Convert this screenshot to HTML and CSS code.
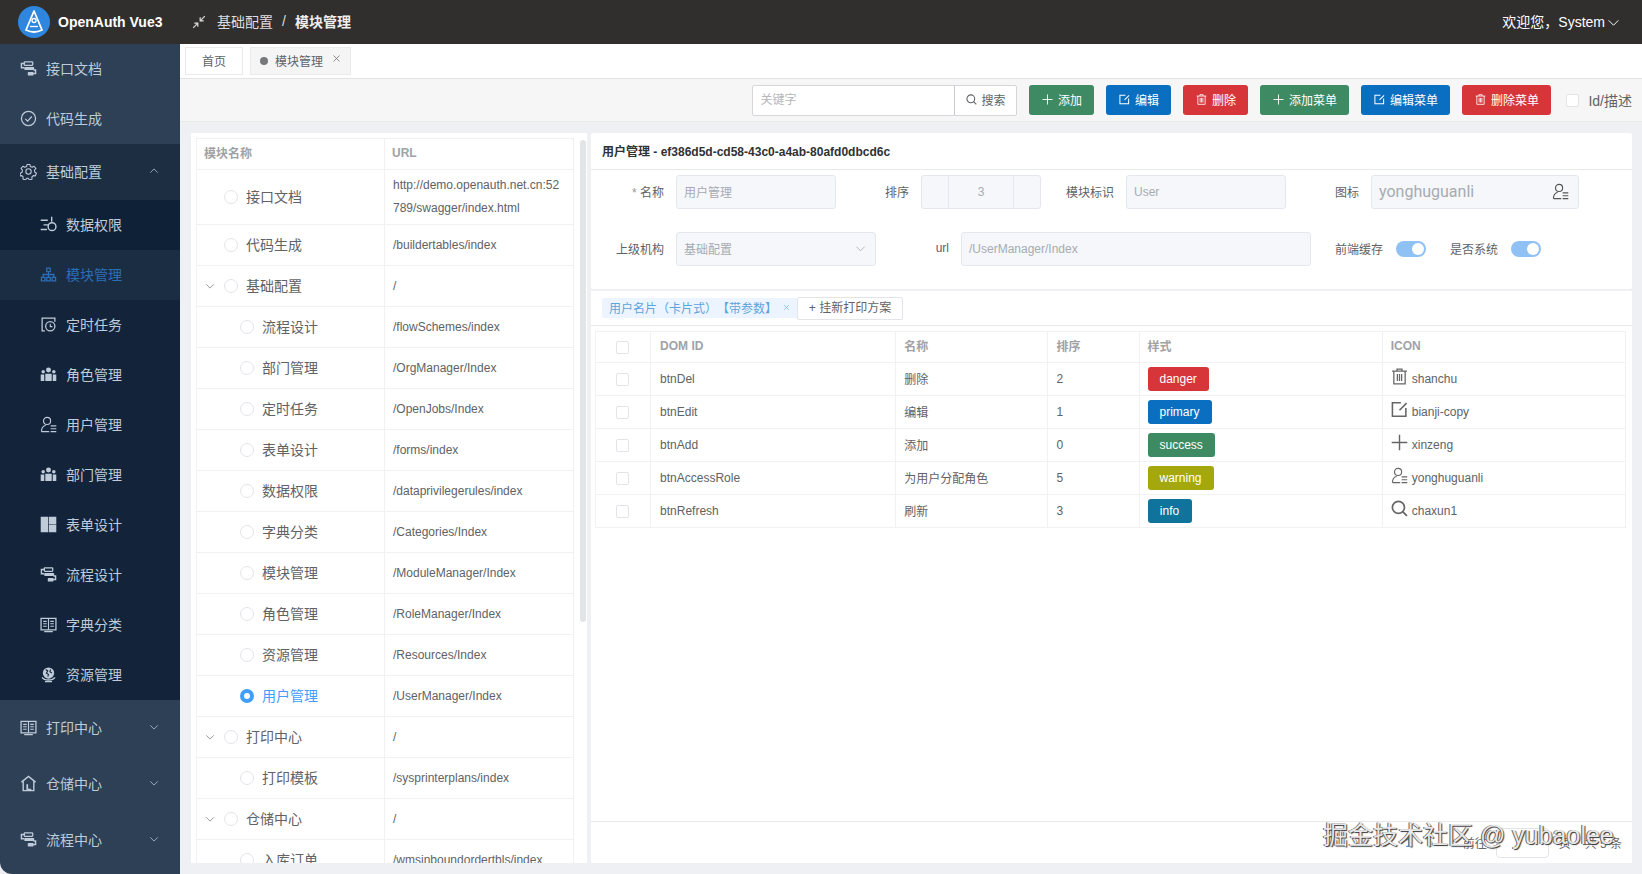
FILE: index.html
```html
<!DOCTYPE html>
<html lang="zh-CN">
<head>
    <meta charset="UTF-8">
    <title>OpenAuth Vue3</title>
    <link rel="stylesheet" href="styles.css">
</head>
<body>
    <!-- Icon sprite -->
    <svg class="sprite" xmlns="http://www.w3.org/2000/svg">
        <symbol id="i-flow" viewBox="0 0 24 24">
            <path d="M7 5H2v6h4M18 19h4v-5h-3" fill="none" stroke="currentColor" stroke-width="2"/>
            <rect x="6" y="2.500" width="12" height="5" rx="1" fill="none" stroke="currentColor" stroke-width="1.800"/>
            <rect x="6" y="10" width="14" height="4" rx="1" fill="currentColor"/>
            <rect x="11" y="17" width="8" height="5" rx="1" fill="currentColor"/>
        </symbol>
        <symbol id="i-check" viewBox="0 0 24 24">
            <circle cx="12" cy="12" r="10" fill="none" stroke="currentColor" stroke-width="1.800"/>
            <path d="M7.500 12.500l3.200 3.200 6-6.500" fill="none" stroke="currentColor" stroke-width="1.800"/>
        </symbol>
        <symbol id="i-gear" viewBox="0 0 24 24">
            <path d="M10 2h4l.7 3 2.400 1.100 2.700-1.500 2.600 3-1.900 2.500.3 2.600 2.400 1.800-1.500 3.700-3-.4-1.900 1.900.3 3-3.700 1.300-1.700-2.500h-2.200l-1.700 2.500-3.700-1.300.3-3-1.900-1.900-3 .4L.7 14.500l2.400-1.800.3-2.600L1.500 7.600l2.600-3 2.700 1.500L9.300 5z" fill="none" stroke="currentColor" stroke-width="1.500" stroke-linejoin="round"/>
            <circle cx="12" cy="12" r="3.800" fill="none" stroke="currentColor" stroke-width="1.500"/>
        </symbol>
        <symbol id="i-data" viewBox="0 0 24 24">
            <path d="M1 6h10M5 12.500h7M1 19h9M16.500 1v7" fill="none" stroke="currentColor" stroke-width="2"/>
            <circle cx="17" cy="15" r="5.500" fill="none" stroke="currentColor" stroke-width="2"/>
        </symbol>
        <symbol id="i-org" viewBox="0 0 24 24">
            <path d="M9.500 3h5v5h-5zM2 16h5v5H2zM9.500 16h5v5h-5zM17 16h5v5h-5z" fill="none" stroke="currentColor" stroke-width="1.800"/>
            <path d="M12 8v4M4.500 16v-4h15v4M12 12v4" fill="none" stroke="currentColor" stroke-width="1.800"/>
        </symbol>
        <symbol id="i-timer" viewBox="0 0 24 24">
            <path d="M9 3H3v18h4M7 3h14v5" fill="none" stroke="currentColor" stroke-width="1.800"/>
            <circle cx="14.500" cy="14.500" r="6.500" fill="none" stroke="currentColor" stroke-width="1.800"/>
            <path d="M14.500 11v4h3" fill="none" stroke="currentColor" stroke-width="1.500"/>
        </symbol>
        <symbol id="i-users" viewBox="0 0 24 24">
            <circle cx="12" cy="5.500" r="3.500" fill="currentColor"/>
            <circle cx="4.500" cy="8" r="2.500" fill="currentColor"/>
            <circle cx="19.500" cy="8" r="2.500" fill="currentColor"/>
            <path d="M7.500 11h9v10h-9zM1 12h5v9H1zM18 12h5v9h-5z" fill="currentColor"/>
        </symbol>
        <symbol id="i-user" viewBox="0 0 24 24">
            <circle cx="10" cy="7" r="5" fill="none" stroke="currentColor" stroke-width="1.600"/>
            <path d="M2 22c0-5 3-8 6-9M2 22h11M15 14h8M15 18h8M15 22h8" fill="none" stroke="currentColor" stroke-width="1.600"/>
        </symbol>
        <symbol id="i-layout" viewBox="0 0 24 24">
            <path d="M1 1h10.500v22H1zM12.500 1H23v10.500H12.500zM12.500 12.500H23V23H12.500z" fill="currentColor"/>
        </symbol>
        <symbol id="i-book" viewBox="0 0 24 24">
            <path d="M1.500 3.500h21v16h-21z" fill="none" stroke="currentColor" stroke-width="1.800"/>
            <path d="M12 3.500v16M4.500 7.500h5M4.500 11h5M4.500 14.500h5M14.500 7.500h5M14.500 11h5M14.500 14.500h5M6 22h12" fill="none" stroke="currentColor" stroke-width="1.600"/>
        </symbol>
        <symbol id="i-globe" viewBox="0 0 24 24">
            <circle cx="12" cy="10" r="8" fill="currentColor"/>
            <path d="M8 5l3 2-2 3 3 2-1 3M15 5l-1 3 3 2" fill="none" stroke="#13243a" stroke-width="1.500"/>
            <path d="M3 16c3 5 15 5 18 0M7 22h10" fill="none" stroke="currentColor" stroke-width="2"/>
        </symbol>
        <symbol id="i-house" viewBox="0 0 24 24">
            <path d="M2 10l10-8 10 8M4.500 9v13h15V9" fill="none" stroke="currentColor" stroke-width="2"/>
            <path d="M9 22v-9h2.500v6.500H16V22z" fill="currentColor"/>
        </symbol>
        <symbol id="i-down" viewBox="0 0 24 24">
            <path d="M3 8l9 9 9-9" fill="none" stroke="currentColor" stroke-width="1.800"/>
        </symbol>
        <symbol id="i-up" viewBox="0 0 24 24">
            <path d="M3 16l9-9 9 9" fill="none" stroke="currentColor" stroke-width="1.800"/>
        </symbol>
        <symbol id="i-x" viewBox="0 0 24 24">
            <path d="M4 4l16 16M20 4L4 20" fill="none" stroke="currentColor" stroke-width="2"/>
        </symbol>
        <symbol id="i-collapse" viewBox="0 0 24 24">
            <path d="M22 2l-8 8M14 4v6h6M2 22l8-8M4 14h6v6" fill="none" stroke="currentColor" stroke-width="2"/>
        </symbol>
        <symbol id="i-search" viewBox="0 0 24 24">
            <circle cx="10.500" cy="10.500" r="8.500" fill="none" stroke="currentColor" stroke-width="2.400"/>
            <path d="M16.500 16.500l6 6" fill="none" stroke="currentColor" stroke-width="2.400"/>
        </symbol>
        <symbol id="i-plus" viewBox="0 0 24 24">
            <path d="M12 1v22M1 12h22" fill="none" stroke="currentColor" stroke-width="2"/>
        </symbol>
        <symbol id="i-edit" viewBox="0 0 24 24">
            <path d="M14 2.500H2v19h19V10M22 3L12 13" fill="none" stroke="currentColor" stroke-width="2.200"/>
        </symbol>
        <symbol id="i-trash" viewBox="0 0 24 24">
            <path d="M1.500 4.500h21M8.500 4.500v-3h7v3M4 4.500v18h16v-18M9 8.500v10M12 8.500v10M15 8.500v10" fill="none" stroke="currentColor" stroke-width="1.800"/>
        </symbol>
    </svg>

    <header class="topbar">
        <div class="brand">
            <svg class="logo" viewBox="0 0 32 32">
                <circle cx="16" cy="16" r="16" fill="#2e86de"/>
                <path d="M16 5L8 24c5 2.500 11 2.500 16 0z" fill="none" stroke="#fff" stroke-width="1.800" stroke-linejoin="round"/>
                <circle cx="16" cy="14.500" r="2" fill="none" stroke="#fff" stroke-width="1.300"/>
                <path d="M12 20.500h8" stroke="#fff" stroke-width="1.300"/>
            </svg>
            <span class="brand-name">OpenAuth Vue3</span>
        </div>
        <svg class="collapse-icon"><use href="#i-collapse"/></svg>
        <nav class="crumbs">
            <span>基础配置</span>
            <span class="crumb-sep">/</span>
            <span class="crumb-current">模块管理</span>
        </nav>
        <div class="welcome">
            <span>欢迎您，System</span>
            <svg class="welcome-arrow"><use href="#i-down"/></svg>
        </div>
    </header>

    <div class="layout">
        <aside class="sidebar">
            <a class="menu-item top"><svg class="menu-icon"><use href="#i-flow"/></svg>接口文档</a>
            <a class="menu-item top"><svg class="menu-icon"><use href="#i-check"/></svg>代码生成</a>
            <a class="menu-item group open"><svg class="menu-icon"><use href="#i-gear"/></svg>基础配置<svg class="menu-arrow"><use href="#i-up"/></svg></a>
            <div class="submenu">
                <a class="menu-item sub first"><svg class="menu-icon"><use href="#i-data"/></svg>数据权限</a>
                <a class="menu-item sub active"><svg class="menu-icon"><use href="#i-org"/></svg>模块管理</a>
                <a class="menu-item sub"><svg class="menu-icon"><use href="#i-timer"/></svg>定时任务</a>
                <a class="menu-item sub"><svg class="menu-icon"><use href="#i-users"/></svg>角色管理</a>
                <a class="menu-item sub"><svg class="menu-icon"><use href="#i-user"/></svg>用户管理</a>
                <a class="menu-item sub"><svg class="menu-icon"><use href="#i-users"/></svg>部门管理</a>
                <a class="menu-item sub"><svg class="menu-icon"><use href="#i-layout"/></svg>表单设计</a>
                <a class="menu-item sub"><svg class="menu-icon"><use href="#i-flow"/></svg>流程设计</a>
                <a class="menu-item sub"><svg class="menu-icon"><use href="#i-book"/></svg>字典分类</a>
                <a class="menu-item sub"><svg class="menu-icon"><use href="#i-globe"/></svg>资源管理</a>
            </div>
            <a class="menu-item group"><svg class="menu-icon"><use href="#i-book"/></svg>打印中心<svg class="menu-arrow"><use href="#i-down"/></svg></a>
            <a class="menu-item group"><svg class="menu-icon"><use href="#i-house"/></svg>仓储中心<svg class="menu-arrow"><use href="#i-down"/></svg></a>
            <a class="menu-item group"><svg class="menu-icon"><use href="#i-flow"/></svg>流程中心<svg class="menu-arrow"><use href="#i-down"/></svg></a>
        </aside>

        <main class="content">
            <div class="tabs">
                <span class="tab">首页</span>
                <span class="tab tab-active"><i class="tab-dot"></i>模块管理<svg class="tab-close"><use href="#i-x"/></svg></span>
            </div>

            <div class="toolbar">
                <div class="search">
                    <span class="search-input">关键字</span>
                    <span class="search-btn"><svg class="btn-icon"><use href="#i-search"/></svg>搜索</span>
                </div>
                <span class="btn success"><svg class="btn-icon"><use href="#i-plus"/></svg>添加</span>
                <span class="btn primary"><svg class="btn-icon"><use href="#i-edit"/></svg>编辑</span>
                <span class="btn danger"><svg class="btn-icon"><use href="#i-trash"/></svg>删除</span>
                <span class="btn success wide"><svg class="btn-icon"><use href="#i-plus"/></svg>添加菜单</span>
                <span class="btn primary wide"><svg class="btn-icon"><use href="#i-edit"/></svg>编辑菜单</span>
                <span class="btn danger wide"><svg class="btn-icon"><use href="#i-trash"/></svg>删除菜单</span>
                <label class="toolbar-check"><i class="checkbox"></i>Id/描述</label>
            </div>

            <div class="page">
                <section class="tree-card">
                    <div class="tree-wrap">
                        <table class="tree-table">
                            <colgroup><col class="tree-col-name"><col></colgroup>
                            <thead>
                                <tr><th>模块名称</th><th>URL</th></tr>
                            </thead>
                            <tbody>
                                <tr><td><div class="node"><i class="node-arrow"></i><i class="radio"></i>接口文档</div></td><td class="url-wrap">http://demo.openauth.net.cn:52789/swagger/index.html</td></tr>
                                <tr><td><div class="node"><i class="node-arrow"></i><i class="radio"></i>代码生成</div></td><td>/buildertables/index</td></tr>
                                <tr><td><div class="node"><svg class="node-arrow"><use href="#i-down"/></svg><i class="radio"></i>基础配置</div></td><td>/</td></tr>
                                <tr><td><div class="node nested"><i class="node-arrow"></i><i class="radio"></i>流程设计</div></td><td>/flowSchemes/index</td></tr>
                                <tr><td><div class="node nested"><i class="node-arrow"></i><i class="radio"></i>部门管理</div></td><td>/OrgManager/Index</td></tr>
                                <tr><td><div class="node nested"><i class="node-arrow"></i><i class="radio"></i>定时任务</div></td><td>/OpenJobs/Index</td></tr>
                                <tr><td><div class="node nested"><i class="node-arrow"></i><i class="radio"></i>表单设计</div></td><td>/forms/index</td></tr>
                                <tr><td><div class="node nested"><i class="node-arrow"></i><i class="radio"></i>数据权限</div></td><td>/dataprivilegerules/index</td></tr>
                                <tr><td><div class="node nested"><i class="node-arrow"></i><i class="radio"></i>字典分类</div></td><td>/Categories/Index</td></tr>
                                <tr><td><div class="node nested"><i class="node-arrow"></i><i class="radio"></i>模块管理</div></td><td>/ModuleManager/Index</td></tr>
                                <tr><td><div class="node nested"><i class="node-arrow"></i><i class="radio"></i>角色管理</div></td><td>/RoleManager/Index</td></tr>
                                <tr><td><div class="node nested"><i class="node-arrow"></i><i class="radio"></i>资源管理</div></td><td>/Resources/Index</td></tr>
                                <tr><td><div class="node nested selected"><i class="node-arrow"></i><i class="radio checked"></i>用户管理</div></td><td>/UserManager/Index</td></tr>
                                <tr><td><div class="node"><svg class="node-arrow"><use href="#i-down"/></svg><i class="radio"></i>打印中心</div></td><td>/</td></tr>
                                <tr><td><div class="node nested"><i class="node-arrow"></i><i class="radio"></i>打印模板</div></td><td>/sysprinterplans/index</td></tr>
                                <tr><td><div class="node"><svg class="node-arrow"><use href="#i-down"/></svg><i class="radio"></i>仓储中心</div></td><td>/</td></tr>
                                <tr><td><div class="node nested"><i class="node-arrow"></i><i class="radio"></i>入库订单</div></td><td>/wmsinboundordertbls/index</td></tr>
                            </tbody>
                        </table>
                    </div>
                    <div class="tree-scroll"><div class="tree-thumb"></div></div>
                </section>

                <div class="detail">
                    <section class="detail-top">
                        <h2 class="detail-title">用户管理 - ef386d5d-cd58-43c0-a4ab-80afd0dbcd6c</h2>
                        <div class="form-row">
                            <label class="field-label"><span class="required">*</span> 名称</label>
                            <span class="field w160">用户管理</span>
                            <label class="field-label">排序</label>
                            <span class="number">
                                <i class="number-side"></i>
                                <span class="number-value">3</span>
                                <i class="number-side"></i>
                            </span>
                            <label class="field-label">模块标识</label>
                            <span class="field w160">User</span>
                            <label class="field-label">图标</label>
                            <span class="field w208 field-icon">yonghuguanli<svg class="field-user"><use href="#i-user"/></svg></span>
                        </div>
                        <div class="form-row">
                            <label class="field-label">上级机构</label>
                            <span class="field w200 field-select">基础配置<svg class="select-arrow"><use href="#i-down"/></svg></span>
                            <label class="field-label">url</label>
                            <span class="field w350">/UserManager/Index</span>
                            <span class="switch-group">
                                <label class="switch-label">前端缓存</label><i class="switch"></i>
                                <label class="switch-label">是否系统</label><i class="switch"></i>
                            </span>
                        </div>
                    </section>

                    <section class="detail-bottom">
                        <div class="plan-bar">
                            <span class="plan-tag">用户名片（卡片式）【带参数】<svg class="plan-close"><use href="#i-x"/></svg></span>
                            <span class="plan-add">+ 挂新打印方案</span>
                        </div>
                        <div class="btn-table-wrap">
                            <table class="btn-table">
                                <colgroup>
                                    <col class="c-check"><col class="c-id"><col class="c-name"><col class="c-sort"><col class="c-style"><col class="c-icon">
                                </colgroup>
                                <thead>
                                    <tr><th class="cell-check"><i class="checkbox"></i></th><th>DOM ID</th><th>名称</th><th>排序</th><th>样式</th><th>ICON</th></tr>
                                </thead>
                                <tbody>
                                    <tr><td class="cell-check"><i class="checkbox"></i></td><td>btnDel</td><td>删除</td><td>2</td><td><span class="badge danger">danger</span></td><td><div class="icon-cell"><svg class="row-icon"><use href="#i-trash"/></svg>shanchu</div></td></tr>
                                    <tr><td class="cell-check"><i class="checkbox"></i></td><td>btnEdit</td><td>编辑</td><td>1</td><td><span class="badge primary">primary</span></td><td><div class="icon-cell"><svg class="row-icon"><use href="#i-edit"/></svg>bianji-copy</div></td></tr>
                                    <tr><td class="cell-check"><i class="checkbox"></i></td><td>btnAdd</td><td>添加</td><td>0</td><td><span class="badge success">success</span></td><td><div class="icon-cell"><svg class="row-icon"><use href="#i-plus"/></svg>xinzeng</div></td></tr>
                                    <tr><td class="cell-check"><i class="checkbox"></i></td><td>btnAccessRole</td><td>为用户分配角色</td><td>5</td><td><span class="badge warning">warning</span></td><td><div class="icon-cell"><svg class="row-icon"><use href="#i-user"/></svg>yonghuguanli</div></td></tr>
                                    <tr><td class="cell-check"><i class="checkbox"></i></td><td>btnRefresh</td><td>刷新</td><td>3</td><td><span class="badge info">info</span></td><td><div class="icon-cell"><svg class="row-icon"><use href="#i-search"/></svg>chaxun1</div></td></tr>
                                </tbody>
                            </table>
                        </div>
                        <div class="pager">
                            <span class="pager-arrow">‹</span>
                            <span class="pager-num">1</span>
                            <span class="pager-arrow">›</span>
                            <span class="pager-text pager-goto">前往</span>
                            <span class="pager-input"></span>
                            <span class="pager-text">页</span>
                            <span class="pager-text pager-total">共 5 条</span>
                        </div>
                    </section>
                </div>
            </div>
        </main>
    </div>

    <!-- Site watermark burned into the screenshot -->
    <div class="watermark">掘金技术社区 @ yubaolee</div>
</body>
</html>
```

FILE: styles.css
```css
* {
    margin: 0;
    padding: 0;
    box-sizing: border-box;
    font-family: "Liberation Sans", "Noto Sans CJK SC", sans-serif;
}

html, body {
    height: 100%;
    overflow: hidden;
}

body {
    display: flex;
    flex-direction: column;
    font-size: 12px;
    color: #606266;
    background-color: #eef0f3;
}

i {
    font-style: normal;
}

.sprite {
    display: none;
}

/* Top bar */
.topbar {
    height: 44px;
    flex: none;
    display: flex;
    align-items: center;
    background-color: #302f2d;
    color: #fff;
}

.brand {
    width: 192px;
    padding-left: 18px;
    display: flex;
    align-items: center;
    gap: 8px;
}

.logo {
    width: 32px;
    height: 32px;
    flex: none;
}

.brand-name {
    font-size: 14px;
    font-weight: bold;
    white-space: nowrap;
}

.collapse-icon {
    width: 14px;
    height: 14px;
    color: #ddd;
}

.crumbs {
    margin-left: 11px;
    padding-bottom: 2px;
    display: flex;
    align-items: center;
    gap: 9px;
    font-size: 14px;
    color: #ddd;
}

.crumb-current {
    font-weight: bold;
    color: #eee;
}

.welcome {
    margin-left: auto;
    padding-right: 22px;
    padding-bottom: 2px;
    display: flex;
    align-items: center;
    gap: 2px;
    font-size: 14px;
}

.welcome-arrow {
    width: 13px;
    height: 13px;
    margin-top: 2px;
}

.layout {
    flex: 1;
    min-height: 0;
    display: flex;
}

/* Sidebar */
.sidebar {
    width: 180px;
    flex: none;
    background-color: #2e4056;
    border-bottom-left-radius: 12px;
    overflow: hidden;
}

.menu-item {
    display: flex;
    align-items: center;
    height: 50px;
    padding-left: 20px;
    padding-bottom: 2px;
    font-size: 14px;
    color: #bfcbd9;
}

.menu-item.group {
    height: 56px;
}

.menu-item.open {
    background-color: #1d2e43;
}

.menu-item.sub {
    padding-left: 40px;
    background-color: #13243a;
}

.menu-item.first {
    background-color: #0f2136;
}

.menu-item.active {
    background-color: #1b2d42;
    color: #2a6fb8;
}

.menu-icon {
    width: 17px;
    height: 17px;
    margin-right: 9px;
    flex: none;
}

.menu-arrow {
    width: 10px;
    height: 10px;
    margin-left: auto;
    margin-right: 21px;
}

/* Tabs */
.content {
    flex: 1;
    min-width: 0;
    display: flex;
    flex-direction: column;
}

.tabs {
    height: 35px;
    flex: none;
    padding: 3px 5px;
    display: flex;
    gap: 7px;
    background-color: #fff;
    border-bottom: 1px solid #e4e4e4;
}

.tab {
    height: 28px;
    padding-bottom: 2px;
    display: flex;
    align-items: center;
    justify-content: center;
    width: 58px;
    border: 1px solid #ebebeb;
    background-color: #fff;
}

.tab-active {
    width: 101px;
    background-color: #f5f5f5;
}

.tab-dot {
    width: 8px;
    height: 8px;
    margin-right: 7px;
    margin-top: 1px;
    border-radius: 50%;
    background-color: #77787a;
}

.tab-close {
    width: 9px;
    height: 9px;
    margin-left: 9px;
    margin-bottom: 3px;
    color: #666;
}

/* Toolbar */
.toolbar {
    height: 43px;
    flex: none;
    padding-right: 10px;
    display: flex;
    align-items: center;
    justify-content: flex-end;
    gap: 12px;
    background-color: #f6f6f6;
    border-bottom: 1px solid #e8e8e8;
}

.search {
    width: 265px;
    height: 31px;
    display: flex;
    background-color: #fff;
    border: 1px solid #d4d6da;
    border-radius: 2px;
}

.search-input {
    width: 202px;
    padding-left: 7px;
    line-height: 29px;
    color: #b4b6ba;
    border-right: 1px solid #c8cacd;
}

.search-btn {
    flex: 1;
    padding-bottom: 1px;
    display: flex;
    align-items: center;
    justify-content: center;
    gap: 4px;
}

.btn-icon {
    width: 11px;
    height: 11px;
    flex: none;
}

.btn {
    width: 65px;
    height: 30px;
    padding-bottom: 1px;
    display: flex;
    align-items: center;
    justify-content: center;
    gap: 5px;
    border-radius: 3px;
    color: #fff;
}

.btn.wide {
    width: 89px;
}

.success {
    background-color: #3d8a63;
}

.primary {
    background-color: #0b6fc1;
}

.danger {
    background-color: #d63539;
}

.warning {
    background-color: #a5a80c;
}

.info {
    background-color: #0f739c;
}

.toolbar-check {
    margin-left: 3px;
    display: flex;
    align-items: center;
    gap: 9px;
    font-size: 14px;
}

.checkbox {
    display: inline-block;
    width: 13px;
    height: 13px;
    background-color: #fff;
    border: 1px solid #e2e4e8;
    border-radius: 2px;
}

/* Page body */
.page {
    flex: 1;
    min-height: 0;
    padding: 11px 10px 11px 11px;
    display: flex;
    gap: 4px;
}

.tree-card {
    width: 396px;
    flex: none;
    padding: 5px 1px 0 5px;
    display: flex;
    gap: 6px;
    background-color: #fff;
}

.tree-wrap {
    width: 378px;
    flex: none;
    overflow: hidden;
}

.tree-table,
.btn-table {
    width: 100%;
    border-collapse: collapse;
    table-layout: fixed;
}

.tree-col-name {
    width: 188px;
}

.tree-table th,
.tree-table td {
    height: 41px;
    padding: 0 8px;
    border: 1px solid #f0f1f3;
    text-align: left;
    font-weight: normal;
}

.tree-table th {
    height: 31px;
    padding: 0 7px 3px;
    font-weight: bold;
    color: #a0a2a6;
}

.url-wrap {
    height: 55px !important;
    line-height: 23px;
    word-break: break-all;
}

.node {
    padding-bottom: 2px;
    display: flex;
    align-items: center;
    font-size: 14px;
}

.node.nested {
    padding-left: 16px;
}

.node.selected {
    color: #409eff;
}

.node-arrow {
    width: 10px;
    height: 10px;
    margin-top: 2px;
    margin-right: 9px;
    flex: none;
    color: #777;
}

.radio {
    width: 14px;
    height: 14px;
    margin-top: 2px;
    margin-right: 8px;
    flex: none;
    border: 1px solid #e2e4e8;
    border-radius: 50%;
}

.radio.checked {
    border: 4.500px solid #409eff;
}

.tree-scroll {
    width: 6px;
    padding-top: 2px;
}

.tree-thumb {
    height: 482px;
    background-color: #e3e4e6;
    border-radius: 3px;
}

/* Detail panel */
.detail {
    flex: 1;
    min-width: 0;
    display: flex;
    flex-direction: column;
    gap: 2px;
}

.detail-top {
    height: 156px;
    flex: none;
    background-color: #fff;
    border-radius: 2px;
}

.detail-title {
    height: 37px;
    padding-left: 11px;
    line-height: 38px;
    font-size: 12px;
    font-weight: bold;
    color: #303133;
    border-bottom: 1px solid #e8e9eb;
}

.form-row {
    margin-top: 5px;
    height: 34px;
    display: flex;
    align-items: center;
}

.form-row + .form-row {
    margin-top: 23px;
}

.field-label {
    width: 73px;
    margin-right: 12px;
    padding-bottom: 2px;
    flex: none;
    text-align: right;
}

.required {
    color: #999;
}

.field {
    height: 34px;
    flex: none;
    padding-left: 7px;
    padding-bottom: 1px;
    display: flex;
    align-items: center;
    color: #a8abb2;
    background-color: #f5f7fa;
    border: 1px solid #e4e7ed;
    border-radius: 3px;
}

.w160 {
    width: 160px;
}

.w200 {
    width: 200px;
}

.w208 {
    width: 208px;
}

.w350 {
    width: 350px;
}

.field-icon {
    font-family: Roboto, sans-serif;
    font-size: 16px;
}

.field-user {
    width: 17px;
    height: 17px;
    margin-left: auto;
    margin-right: 9px;
    color: #555;
}

.select-arrow {
    width: 11px;
    height: 11px;
    margin-left: auto;
    margin-right: 9px;
    color: #a8abb2;
}

.number {
    width: 120px;
    height: 34px;
    flex: none;
    display: flex;
    background-color: #f5f7fa;
    border: 1px solid #e4e7ed;
    border-radius: 3px;
    color: #a8abb2;
}

.number-side {
    width: 26px;
}

.number-value {
    flex: 1;
    line-height: 32px;
    text-align: center;
    border-left: 1px solid #e4e7ed;
    border-right: 1px solid #e4e7ed;
}

.switch-group {
    margin-left: 24px;
    display: flex;
    align-items: center;
}

.switch-label {
    margin-right: 13px;
    padding-bottom: 2px;
}

.switch {
    width: 30px;
    height: 16px;
    margin-right: 24px;
    position: relative;
    background-color: #8fc1f5;
    border-radius: 8px;
}

.switch::after {
    content: "";
    position: absolute;
    top: 2px;
    right: 2px;
    width: 12px;
    height: 12px;
    background-color: #fff;
    border-radius: 50%;
}

.detail-bottom {
    flex: 1;
    min-height: 0;
    display: flex;
    flex-direction: column;
    background-color: #fff;
}

.plan-bar {
    height: 35px;
    flex: none;
    padding-left: 11px;
    display: flex;
    align-items: center;
    border-bottom: 1px solid #e8e9eb;
}

.plan-tag {
    height: 20px;
    width: 195px;
    padding-left: 7px;
    padding-bottom: 1px;
    display: flex;
    align-items: center;
    white-space: nowrap;
    text-spacing-trim: space-all;
    color: #5ba4dc;
    background-color: #ecf5ff;
    border-radius: 2px 0 0 2px;
}

.plan-close {
    width: 7px;
    height: 7px;
    margin-left: auto;
    margin-right: 7px;
    flex: none;
}

.plan-add {
    width: 106px;
    height: 23px;
    line-height: 21px;
    text-align: center;
    border: 1px solid #e2e4e8;
    border-radius: 2px;
}

.btn-table-wrap {
    flex: 1;
    min-height: 0;
    padding: 5px 6px 0 4px;
}

.c-check {
    width: 55px;
}

.c-id {
    width: 245px;
}

.c-name {
    width: 152px;
}

.c-sort {
    width: 91px;
}

.c-style,
.c-icon {
    width: 243px;
}

.btn-table th,
.btn-table td {
    height: 33px;
    padding: 0 8px 1px;
    border: 1px solid #f0f1f3;
    text-align: left;
}

.btn-table th {
    height: 31px;
    padding-bottom: 3px;
    font-weight: bold;
    color: #a0a2a6;
}

.btn-table td:nth-child(2),
.btn-table th:nth-child(2) {
    padding-left: 9px;
}

.btn-table .cell-check {
    padding: 0 0 0 20px;
}

.btn-table .checkbox {
    display: block;
}

.badge {
    display: inline-block;
    min-width: 44px;
    height: 24px;
    margin-top: 1px;
    padding: 0 12px;
    line-height: 24px;
    text-align: center;
    color: #fff;
    border-radius: 3px;
}

.icon-cell {
    display: flex;
    align-items: center;
    gap: 4px;
}

.row-icon {
    width: 17px;
    height: 17px;
    flex: none;
    margin-top: -4px;
    color: #666;
}

/* Pager */
.pager {
    height: 42px;
    flex: none;
    padding-right: 10px;
    display: flex;
    align-items: center;
    justify-content: flex-end;
    color: #666;
    border-top: 1px solid #e8e9eb;
}

.pager-arrow {
    font-size: 14px;
    color: #c0c4cc;
}

.pager-num {
    margin: 0 18px;
    font-weight: bold;
    color: #409eff;
}

.pager-goto {
    margin-left: 28px;
}

.pager-input {
    width: 53px;
    height: 30px;
    margin: 0 10px 0 9px;
    border: 1px solid #e2e4e8;
    border-radius: 4px;
}

.pager-total {
    margin-left: 14px;
}

/* Watermark */
.watermark {
    position: absolute;
    top: 815px;
    left: 1323px;
    font-size: 25px;
    white-space: nowrap;
    color: #e8e8e8;
    text-shadow: 1px 1px 1px #333, -1px 0 0 #666;
}
```
